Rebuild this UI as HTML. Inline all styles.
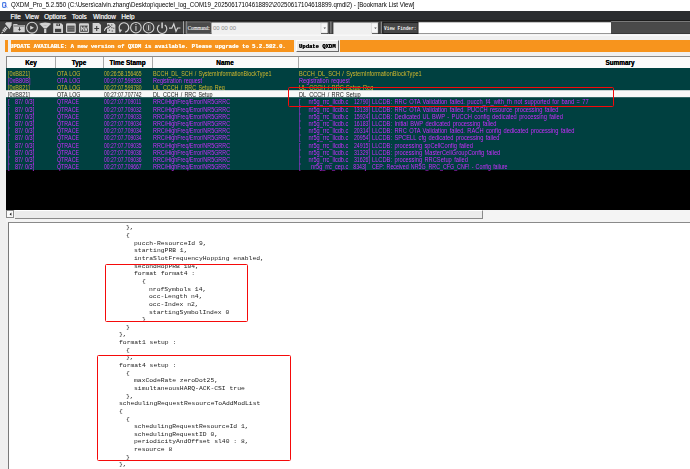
<!DOCTYPE html>
<html><head><meta charset="utf-8">
<style>
*{box-sizing:border-box}
html,body{margin:0;padding:0}
body{width:690px;height:469px;overflow:hidden;position:relative;background:#f0f0f0;font-family:"Liberation Sans",sans-serif}
.abs{position:absolute}
#title{left:0;top:0;width:690px;height:11px;background:#fff}
#title .t{position:absolute;left:10.8px;top:0px;font-size:6.8px;line-height:10px;color:#000;transform:scaleX(0.9);transform-origin:0 50%;white-space:nowrap}
#menu{left:0;top:11px;width:690px;height:10px;background:#2b2d30}
#menu span{position:absolute;top:0.5px;font-size:6.4px;line-height:10px;color:#e8e8e8;text-shadow:0.2px 0 0 #e8e8e8;white-space:nowrap}
#tb{left:0;top:20px;width:690px;height:15px;background:#474747;border-top:1px solid #1a1a1a}
#tb .hl{position:absolute;left:0;top:0;width:690px;height:1px;background:#7a7a7a}
#tb .bl{position:absolute;left:0;bottom:0;width:690px;height:1px;background:#222}
#orange{left:10.8px;top:39.8px;width:282.8px;height:12.2px;background:#f7941d}
#orange2{left:340.4px;top:39.8px;width:349.6px;height:12.2px;background:#f7941d}
#ostrip{left:5.2px;top:39.8px;width:2.6px;height:12.2px;background:#f7941d}
#otext{left:10.3px;top:41px;height:12px;line-height:12px;font-family:"Liberation Mono",monospace;font-weight:bold;font-size:5.7px;color:#fffaf0;white-space:pre;transform:scaleX(0.985);transform-origin:0 50%;text-shadow:0.3px 0 0 #fffaf0}
#btn{left:296px;top:39.8px;width:43px;height:12.2px;background:#ececec;border-right:1.2px solid #6a6a6a;border-bottom:1.2px solid #6a6a6a;border-top:1px solid #fff;border-left:1px solid #fff}
#btn span{position:absolute;left:2px;top:0.8px;line-height:10px;font-family:"Liberation Mono",monospace;font-weight:bold;font-size:6px;transform:scaleX(0.92);transform-origin:0 50%;color:#000;text-shadow:0.3px 0 0 #000;white-space:pre}
#hdr{left:6px;top:56px;width:684px;height:12px;background:#fafafa;border-top:1px solid #8a8a8a;border-left:1px solid #8a8a8a}
#hdr .sep{position:absolute;top:0;width:1px;height:11px;background:#a8a8a8}
#hdr span{position:absolute;top:0.3px;line-height:11px;font-size:6.4px;font-weight:bold;color:#000;text-shadow:0.05px 0 0 #000;text-align:center;white-space:nowrap}
#tbl{left:6px;top:68px;width:684px;height:101.5px;background:#004040}
#blk{left:6px;top:169.5px;width:684px;height:40.5px;background:#000}
.row{position:absolute;left:6px;width:684px;height:7.2px;font-size:6.5px;line-height:8px;white-space:pre}
.row span{position:absolute;top:0.9px;word-spacing:0.9px;transform-origin:0 50%}
.ry{color:#d0b82c}
.rp{color:#c92cff}
.rs{background:#f8f8f8;color:#1a1a1a}
.rs span{text-shadow:none}
.c1{left:2.2px;transform:scaleX(0.85)}.c1b{left:8.5px;transform:scaleX(0.85)}.c1c{left:19px;transform:scaleX(0.85)}.c2{left:50.6px;transform:scaleX(0.81)}.c3{left:98.4px;transform:scaleX(0.77)}.c4{left:146.8px;transform:scaleX(0.83)}.c5{left:292.6px;transform:scaleX(0.86)}
.c6{right:342px;text-align:right;transform-origin:100% 50%!important;transform:scaleX(0.86)}
.c7{right:320px;text-align:right;transform-origin:100% 50%!important;transform:scaleX(0.8)}
.c8{left:365.8px;transform:scaleX(0.88)}
.c7b{right:324px!important}
.c8b{transform:scaleX(0.815)!important}
#sb{left:6px;top:210px;width:684px;height:12px;background:#f4f4f4}
#sbl{left:6.4px;top:210px;width:8px;height:8.4px;background:#fbfbfb;border:0.8px solid #8a8a8a}
#thumb{left:15px;top:210px;width:468px;height:9px;background:#ececec;border-right:1px solid #8a8a8a;border-bottom:1px solid #8a8a8a;border-top:1px solid #fff}
#panel{left:7.8px;top:221.8px;width:682.2px;height:248px;background:#fff;border-top:1.2px solid #8a8a8a;border-left:1.3px solid #7a7a7a}
.ln{position:absolute;font-family:"Liberation Mono",monospace;font-size:5.8px;line-height:6px;color:#1a1a1a;transform:scaleX(1.098);transform-origin:0 50%;white-space:pre}
.red{position:absolute;border:1.9px solid #f50a0a;border-radius:1.5px}
</style></head><body>
<div id="title" class="abs">
<svg class="abs" style="left:0;top:0" width="10" height="10" viewBox="0 0 10 10"><rect x="2.6" y="2.6" width="3.2" height="4.8" rx="0.9" stroke="#4a7ee6" stroke-width="1.1" fill="none"/><path d="M5 5.4 L7.4 7.6" stroke="#5a8ae8" stroke-width="0.9"/><circle cx="5.3" cy="5.5" r="0.6" fill="#5a22c8"/></svg>
<div class="t">QXDM_Pro_5.2.550 (C:\Users\calvin.zhang\Desktop\quectel_log_COM19_20250617104618892\20250617104618899.qmdl2) - [Bookmark List View]</div>
</div>
<div id="menu" class="abs">
<span style="left:10.4px"><u>F</u>ile</span>
<span style="left:25px"><u>V</u>iew</span>
<span style="left:44px"><u>O</u>ptions</span>
<span style="left:71.7px"><u>T</u>ools</span>
<span style="left:93px"><u>W</u>indow</span>
<span style="left:121.3px"><u>H</u>elp</span>
</div>
<svg class="abs" style="left:0;top:0" width="690" height="40" viewBox="0 0 690 40">
<rect x="0" y="20" width="690" height="14" fill="#3d3d3d"/>
<rect x="0" y="20" width="690" height="1.3" fill="#1c1c1c"/>
<rect x="0" y="33.4" width="690" height="0.8" fill="#262626"/>
<rect x="0" y="34.2" width="690" height="1.3" fill="#ffffff"/>
<g fill="#cfcfcf" stroke="none">
<path d="M5 23.8 L6.4 22.2 L11.8 22.2 L11.5 25.3 L9.6 29.2 Z"/>
<path d="M2.2 30.2 L5.3 26.6 L7.6 28.6 L4.4 32.2 Z"/>
<path d="M1.1 33.2 L2.3 31.5 L3.2 32.4 L1.8 33.6 Z"/>
<path d="M13.3 24 H17.2 L17.8 25 H24.8 V32.3 H13.3 Z"/>
</g>
<path d="M3.25 29 L5.45 31 M4.5 27.6 L6.7 29.6" stroke="#3d3d3d" stroke-width="0.6"/>
<rect x="14" y="25.6" width="10.2" height="0.8" fill="#4a4a4a"/>
<path d="M19.5 27.2 V29.6" stroke="#333" stroke-width="0.9"/><path d="M18.1 29 H20.9 L19.5 31 Z" fill="#333"/>
<g fill="none" stroke="#d4d4d4" stroke-width="1.05">
<circle cx="32" cy="27.7" r="5.4"/>
<circle cx="135.9" cy="27.7" r="5.3"/>
<circle cx="148.6" cy="27.7" r="5.3"/>
<path d="M120.4 30.8 A4.8 4.8 0 1 1 125.2 32.2" stroke-width="1.2"/>
<path d="M159.4 25 A4.7 4.7 0 1 0 164.8 25" stroke-width="1.15"/>
<path d="M162.1 22.4 V28.2" stroke-width="1.5"/>
<path d="M169 28.2 H171.8 L173.8 24 L176 31.4 L177.6 28 H180.4" stroke-width="1.2"/>
<rect x="146.8" y="24.8" width="3.6" height="5.8" stroke="#777" stroke-width="0.6"/>
</g>
<path d="M30.2 25.7 V29.8 L34 27.75 Z" fill="#d4d4d4"/>
<g fill="#d2d2d2">
<ellipse cx="45.2" cy="23.9" rx="5.8" ry="1.4"/>
<path d="M40 24.5 Q45.2 26 50.4 24.5 L46.4 28.6 H44 Z"/>
<rect x="44.1" y="29" width="2.2" height="4"/>
<path d="M53.2 23.2 H61.2 L63 25 V33 H53.2 Z"/>
<rect x="66" y="23.2" width="9.8" height="9.8" rx="1.2"/>
<rect x="79" y="23.2" width="10" height="9.8" rx="1.2"/>
<path d="M92.6 23 H99 L101 25 V33 H92.6 Z"/>
<path d="M107 23 H113.6 L115.4 24.8 V33 H107 Z"/>
</g>
<rect x="56.4" y="23.6" width="3.6" height="2.4" fill="#3d3d3d"/><rect x="57.6" y="23.9" width="1.2" height="1.6" fill="#cfcfcf"/>
<rect x="55" y="28.8" width="6.2" height="3.4" fill="#3d3d3d"/>
<rect x="67.2" y="25.6" width="7.4" height="6.2" fill="#5e5e5e"/><rect x="67.8" y="27.4" width="6.2" height="0.6" fill="#7a7a7a"/><rect x="67.8" y="29.2" width="6.2" height="0.6" fill="#7a7a7a"/>
<rect x="80.2" y="25.6" width="7.6" height="6.2" fill="#4a4a4a"/>
<path d="M81.3 30.8 V26.6 L83.9 30.8 V26.6 M84.7 26.6 L86.1 30.8 L87.5 26.6" stroke="#e4e4e4" stroke-width="0.9" fill="none"/>
<path d="M96.7 26 V31 M94.3 28.5 H99.1" stroke="#3d3d3d" stroke-width="1.1"/>
<g fill="#6a6a6a"><rect x="108" y="24.4" width="1.4" height="1.1"/><rect x="111" y="24.4" width="1.4" height="1.1"/><rect x="111.2" y="27" width="1.3" height="1.3"/><rect x="108.8" y="29.6" width="1.3" height="1.3"/><rect x="111.6" y="30.4" width="1.5" height="1.2"/><rect x="113.2" y="27.6" width="1.1" height="1.3"/></g>
<path d="M104.4 30.8 Q105.2 27.2 109 26.6" stroke="#2e2e2e" stroke-width="2.4" fill="none"/><path d="M107.8 24.9 L110.6 26.5 L108 28.4 Z" fill="#e0e0e0" stroke="#2e2e2e" stroke-width="0.8"/><path d="M104.4 30.8 Q105.2 27.2 109 26.6" stroke="#e0e0e0" stroke-width="1.1" fill="none"/>
<path d="M118.6 29.4 L122.2 29.8 L119.8 33 Z" fill="#cfcfcf"/>
<rect x="135.4" y="24" width="1.1" height="1.1" fill="#cfcfcf"/>
<rect x="135.4" y="26" width="1.1" height="4.8" fill="#cfcfcf"/>
<rect x="148.1" y="25.2" width="1.1" height="5" fill="#d8d8d8"/>
<rect x="183" y="21.2" width="0.9" height="12.6" fill="#b0b0b0"/>
<rect x="185.8" y="21.2" width="0.9" height="12.6" fill="#b0b0b0"/>
<path d="M186.8 21.9 H209.5 Q211.5 21.9 211.5 23.9 V31.5 Q211.5 33.5 209.5 33.5 H186.8 Z" fill="#4a4a4a" stroke="#8a8a8a" stroke-width="0.6"/>
<text x="187.8" y="30.2" font-family="Liberation Serif" font-size="6.6" fill="#f4f4f4" stroke="#f4f4f4" stroke-width="0.12" textLength="21.8" lengthAdjust="spacingAndGlyphs">Command:</text>
<rect x="211.5" y="22.5" width="117" height="11.5" fill="#f0f0f0"/><rect x="327.6" y="22.5" width="0.8" height="11.2" fill="#222"/><rect x="321" y="33.2" width="7" height="0.8" fill="#222"/>
<text x="213" y="30.2" font-family="Liberation Sans" font-size="5.9" fill="#8a8a8a">00 00 00</text>
<rect x="321" y="23" width="6.2" height="10" fill="#f7f7f7" stroke="#c0c0c0" stroke-width="0.4"/>
<path d="M323.5 27.6 H326 L324.75 28.9 Z" fill="#555"/>
<rect x="328.6" y="21.2" width="4.6" height="12.6" fill="#3d3d3d"/>
<rect x="330.4" y="21.6" width="1" height="11.8" fill="#9a9a9a"/>
<rect x="333.4" y="22.5" width="45.5" height="11.5" fill="#f0f0f0"/><rect x="378.2" y="22.5" width="0.8" height="11.2" fill="#222"/><rect x="372" y="33.2" width="7" height="0.8" fill="#222"/>
<rect x="371.6" y="23" width="6.2" height="10" fill="#f7f7f7" stroke="#c0c0c0" stroke-width="0.4"/>
<path d="M374.2 27.6 H376.7 L375.45 28.9 Z" fill="#555"/>
<rect x="379" y="21.2" width="3.8" height="12.6" fill="#3d3d3d"/>
<rect x="380.8" y="21.6" width="1" height="11.8" fill="#9a9a9a"/>
<rect x="382.9" y="22.5" width="35.3" height="10.9" fill="#474747" stroke="#161616" stroke-width="0.8"/>
<text x="384" y="30.2" font-family="Liberation Mono" font-weight="bold" font-size="6" fill="#f0f0f0" textLength="32.5" lengthAdjust="spacingAndGlyphs">View Finder:</text>
<rect x="418.5" y="22.3" width="192.6" height="11.2" fill="#ffffff"/>
<rect x="611.1" y="21" width="78.9" height="1" fill="#7a7a7a"/>
<rect x="611.1" y="22.2" width="78.9" height="11.2" fill="#4a4a4a"/>
</svg>
<div id="ostrip" class="abs"></div>
<div id="orange" class="abs"></div><div id="orange2" class="abs"></div>
<div id="otext" class="abs">UPDATE AVAILABLE: A new version of QXDM is available. Please upgrade to 5.2.582.0.</div>
<div id="btn" class="abs"><span>Update QXDM</span></div>
<div id="hdr" class="abs">
<div class="sep" style="left:48px"></div><div class="sep" style="left:95.5px"></div><div class="sep" style="left:144.5px"></div><div class="sep" style="left:291.2px"></div>
<span style="left:0;width:48px">Key</span>
<span style="left:48px;width:48px">Type</span>
<span style="left:96px;width:49px">Time Stamp</span>
<span style="left:145px;width:146px">Name</span>
<span style="left:291px;width:644px">Summary</span>
</div>
<div id="tbl" class="abs"></div>
<div id="blk" class="abs"></div>
<div class="abs" style="left:0;top:0;width:690px;height:469px">
<div class="row ry" style="top:0;transform:translateY(68.60px)"><span class="c1">[0xB821]</span><span class="c2">OTA LOG</span><span class="c3">00:26:58.156465</span><span class="c4">BCCH_DL_SCH / SystemInformationBlockType1</span><span class="c5">BCCH_DL_SCH / SystemInformationBlockType1</span></div>
<div class="row rp" style="top:0;transform:translateY(75.80px)"><span class="c1">[0xB80B]</span><span class="c2">OTA LOG</span><span class="c3">00:27:07.599533</span><span class="c4">Registration request</span><span class="c5">Registration request</span></div>
<div class="row ry" style="top:0;transform:translateY(83.00px)"><span class="c1">[0xB821]</span><span class="c2">OTA LOG</span><span class="c3">00:27:07.599780</span><span class="c4">UL_CCCH / RRC Setup Req</span><span class="c5">UL_CCCH / RRC Setup Req</span></div>
<div class="row rs" style="top:0;transform:translateY(90.20px)"><span class="c1">[0xB821]</span><span class="c2">OTA LOG</span><span class="c3">00:27:07.707742</span><span class="c4">DL_CCCH / RRC Setup</span><span class="c5">DL_CCCH / RRC Setup</span></div>
<div class="row rp" style="top:0;transform:translateY(97.40px)"><span class="c1">[</span><span class="c1b">87/</span><span class="c1c">0/3]</span><span class="c2">QTRACE</span><span class="c3">00:27:07.709011</span><span class="c4">RRC/HighFreq/Error/NR5GRRC</span><span class="c5">[</span><span class="c6">nr5g_rrc_llcdb.c</span><span class="c7">12790]</span><span class="c8">LLCDB: RRC OTA Validation failed. pucch_f4_with_fh not supported for band = 77</span></div>
<div class="row rp" style="top:0;transform:translateY(104.60px)"><span class="c1">[</span><span class="c1b">87/</span><span class="c1c">0/3]</span><span class="c2">QTRACE</span><span class="c3">00:27:07.709032</span><span class="c4">RRC/HighFreq/Error/NR5GRRC</span><span class="c5">[</span><span class="c6">nr5g_rrc_llcdb.c</span><span class="c7">13139]</span><span class="c8">LLCDB: RRC OTA Validation failed. PUCCH resource processing failed</span></div>
<div class="row rp" style="top:0;transform:translateY(111.80px)"><span class="c1">[</span><span class="c1b">87/</span><span class="c1c">0/3]</span><span class="c2">QTRACE</span><span class="c3">00:27:07.709033</span><span class="c4">RRC/HighFreq/Error/NR5GRRC</span><span class="c5">[</span><span class="c6">nr5g_rrc_llcdb.c</span><span class="c7">15924]</span><span class="c8">LLCDB: Dedicated UL BWP - PUCCH config dedicated processing failed</span></div>
<div class="row rp" style="top:0;transform:translateY(119.00px)"><span class="c1">[</span><span class="c1b">87/</span><span class="c1c">0/3]</span><span class="c2">QTRACE</span><span class="c3">00:27:07.709034</span><span class="c4">RRC/HighFreq/Error/NR5GRRC</span><span class="c5">[</span><span class="c6">nr5g_rrc_llcdb.c</span><span class="c7">16183]</span><span class="c8">LLCDB: Initial BWP dedicated processing failed</span></div>
<div class="row rp" style="top:0;transform:translateY(126.20px)"><span class="c1">[</span><span class="c1b">87/</span><span class="c1c">0/3]</span><span class="c2">QTRACE</span><span class="c3">00:27:07.709034</span><span class="c4">RRC/HighFreq/Error/NR5GRRC</span><span class="c5">[</span><span class="c6">nr5g_rrc_llcdb.c</span><span class="c7">20314]</span><span class="c8">LLCDB: RRC OTA Validation failed. RACH config dedicated processing failed</span></div>
<div class="row rp" style="top:0;transform:translateY(133.40px)"><span class="c1">[</span><span class="c1b">87/</span><span class="c1c">0/3]</span><span class="c2">QTRACE</span><span class="c3">00:27:07.709034</span><span class="c4">RRC/HighFreq/Error/NR5GRRC</span><span class="c5">[</span><span class="c6">nr5g_rrc_llcdb.c</span><span class="c7">20954]</span><span class="c8">LLCDB: SPCELL cfg dedicated processing failed</span></div>
<div class="row rp" style="top:0;transform:translateY(140.60px)"><span class="c1">[</span><span class="c1b">87/</span><span class="c1c">0/3]</span><span class="c2">QTRACE</span><span class="c3">00:27:07.709035</span><span class="c4">RRC/HighFreq/Error/NR5GRRC</span><span class="c5">[</span><span class="c6">nr5g_rrc_llcdb.c</span><span class="c7">24915]</span><span class="c8">LLCDB: processing spCellConfig failed</span></div>
<div class="row rp" style="top:0;transform:translateY(147.80px)"><span class="c1">[</span><span class="c1b">87/</span><span class="c1c">0/3]</span><span class="c2">QTRACE</span><span class="c3">00:27:07.709036</span><span class="c4">RRC/HighFreq/Error/NR5GRRC</span><span class="c5">[</span><span class="c6">nr5g_rrc_llcdb.c</span><span class="c7">31329]</span><span class="c8">LLCDB: processing MasterCellGroupConfig failed</span></div>
<div class="row rp" style="top:0;transform:translateY(155.00px)"><span class="c1">[</span><span class="c1b">87/</span><span class="c1c">0/3]</span><span class="c2">QTRACE</span><span class="c3">00:27:07.709036</span><span class="c4">RRC/HighFreq/Error/NR5GRRC</span><span class="c5">[</span><span class="c6">nr5g_rrc_llcdb.c</span><span class="c7">31626]</span><span class="c8">LLCDB: processing RRCSetup failed</span></div>
<div class="row rp" style="top:0;transform:translateY(162.20px)"><span class="c1">[</span><span class="c1b">87/</span><span class="c1c">0/3]</span><span class="c2">QTRACE</span><span class="c3">00:27:07.709667</span><span class="c4">RRC/HighFreq/Error/NR5GRRC</span><span class="c5">[</span><span class="c6">nr5g_rrc_cep.c</span><span class="c7 c7b">8343]</span><span class="c8 c8b">CEP: Received NR5G_RRC_CFG_CNF! - Config failure</span></div>
</div>
<div id="sb" class="abs"></div>
<div id="thumb" class="abs"></div>
<div id="sbl" class="abs"></div><svg class="abs" style="left:6px;top:210px" width="9" height="9"><path d="M5.4 2.6 V5.8 L3.6 4.2 Z" fill="#111"/></svg>
<div id="panel" class="abs"></div>
<div class="abs" style="left:0;top:0;width:690px;height:469px;overflow:hidden">
<div class="ln" style="top:225.40px;left:126.24px">},</div>
<div class="ln" style="top:233.05px;left:126.24px">{</div>
<div class="ln" style="top:240.69px;left:133.88px">pucch-ResourceId 9,</div>
<div class="ln" style="top:248.34px;left:133.88px">startingPRB 1,</div>
<div class="ln" style="top:255.98px;left:133.88px">intraSlotFrequencyHopping enabled,</div>
<div class="ln" style="top:263.62px;left:133.88px">secondHopPRB 104,</div>
<div class="ln" style="top:271.27px;left:133.88px">format format4 :</div>
<div class="ln" style="top:278.91px;left:141.52px">{</div>
<div class="ln" style="top:286.56px;left:149.16px">nrofSymbols 14,</div>
<div class="ln" style="top:294.20px;left:149.16px">occ-Length n4,</div>
<div class="ln" style="top:301.85px;left:149.16px">occ-Index n2,</div>
<div class="ln" style="top:309.50px;left:149.16px">startingSymbolIndex 0</div>
<div class="ln" style="top:317.14px;left:141.52px">}</div>
<div class="ln" style="top:324.78px;left:126.24px">}</div>
<div class="ln" style="top:332.43px;left:118.60px">},</div>
<div class="ln" style="top:340.07px;left:118.60px">format1 setup :</div>
<div class="ln" style="top:347.72px;left:126.24px">{</div>
<div class="ln" style="top:355.37px;left:126.24px">},</div>
<div class="ln" style="top:363.01px;left:118.60px">format4 setup :</div>
<div class="ln" style="top:370.65px;left:126.24px">{</div>
<div class="ln" style="top:378.30px;left:133.88px">maxCodeRate zeroDot25,</div>
<div class="ln" style="top:385.94px;left:133.88px">simultaneousHARQ-ACK-CSI true</div>
<div class="ln" style="top:393.59px;left:126.24px">},</div>
<div class="ln" style="top:401.23px;left:118.60px">schedulingRequestResourceToAddModList</div>
<div class="ln" style="top:408.88px;left:118.60px">{</div>
<div class="ln" style="top:416.52px;left:126.24px">{</div>
<div class="ln" style="top:424.17px;left:133.88px">schedulingRequestResourceId 1,</div>
<div class="ln" style="top:431.81px;left:133.88px">schedulingRequestID 0,</div>
<div class="ln" style="top:439.46px;left:133.88px">periodicityAndOffset sl40 : 8,</div>
<div class="ln" style="top:447.10px;left:133.88px">resource 8</div>
<div class="ln" style="top:454.75px;left:126.24px">}</div>
<div class="ln" style="top:462.39px;left:118.60px">},</div>
</div>
<div class="red" style="left:287.8px;top:87px;width:326.4px;height:19.8px"></div>
<div class="red" style="left:104.6px;top:263.7px;width:143.4px;height:58.2px"></div>
<div class="red" style="left:97px;top:355px;width:194.2px;height:106.1px"></div>
</body></html>
